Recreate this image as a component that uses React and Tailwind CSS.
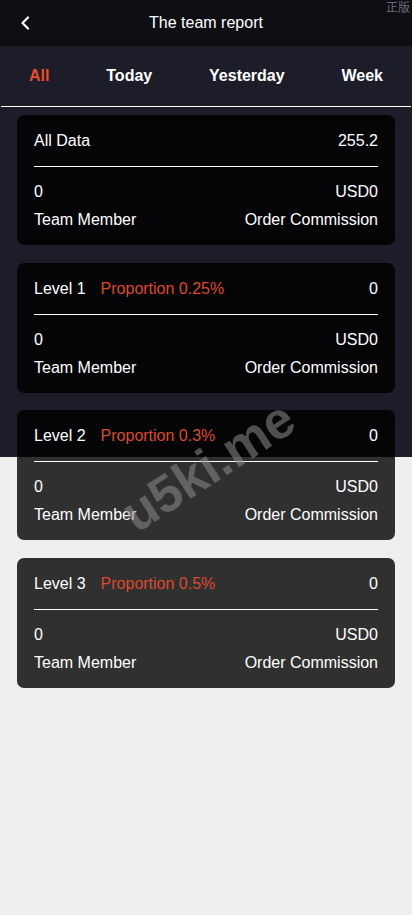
import React from "react";

const tabs = ["All", "Today", "Yesterday", "Week"];

function Card({ left, prop, right }) {
  return (
    <div className="rounded-[7px] bg-black/80 px-[17px] pt-[14px] pb-[13px] text-[16px] leading-[24px] text-white">
      <div className="flex items-center justify-between">
        <div className="flex items-center">
          <span>{left}</span>
          {prop && <span className="ml-[15px] text-[#dc4a2f]">{prop}</span>}
        </div>
        <span>{right}</span>
      </div>
      <div className="mt-[13px] h-px bg-white" />
      <div className="mt-[13px] flex justify-between">
        <span>0</span>
        <span>USD0</span>
      </div>
      <div className="mt-[4px] flex justify-between">
        <span>Team Member</span>
        <span>Order Commission</span>
      </div>
    </div>
  );
}

export default function App() {
  return (
    <div
      className="relative min-h-[915px] overflow-hidden bg-[linear-gradient(to_bottom,#1d1d29_457px,#efefef_457px)]"
      style={{ fontFamily: '"Liberation Sans", Arial, sans-serif' }}
    >
      <div className="relative flex h-[46px] items-center justify-center bg-[#0e0e13]">
        <svg
          className="absolute left-[19px] top-[16px]"
          width="12"
          height="14"
          viewBox="0 0 12 14"
          fill="none"
        >
          <path d="M9 1.5L3.5 7L9 12.5" stroke="white" strokeWidth="2.2" strokeLinecap="round" strokeLinejoin="round" />
        </svg>
        <span className="text-[16px] text-white">The team report</span>
      </div>
      <div className="flex h-[60px] items-center justify-between bg-[#1d1d29] px-[29px]">
        {tabs.map((t, i) => (
          <span
            key={t}
            className={
              i === 0
                ? "text-[16px] font-bold text-[#e84c2c]"
                : "text-[16px] font-bold text-white"
            }
          >
            {t}
          </span>
        ))}
      </div>
      <div className="mx-[1px] h-px bg-white" />
      <div className="mt-[8px] flex flex-col gap-[17.5px] px-[17px]">
        <Card left="All Data" right="255.2" />
        <Card left="Level 1" prop="Proportion 0.25%" right="0" />
        <Card left="Level 2" prop="Proportion 0.3%" right="0" />
        <Card left="Level 3" prop="Proportion 0.5%" right="0" />
      </div>
      <span
        className="pointer-events-none absolute right-[2px] top-0 text-[12px] leading-[13px] text-[#6b6b72]"
        style={{ fontFamily: '"Noto Sans CJK SC", sans-serif' }}
      >
        正版
      </span>
      <div className="pointer-events-none absolute left-[208px] top-[466px] -translate-x-1/2 -translate-y-1/2 -rotate-[33deg] whitespace-nowrap text-[52px] font-bold leading-none text-[#8c8c8c]/55">
        u5ki.me
      </div>
    </div>
  );
}
